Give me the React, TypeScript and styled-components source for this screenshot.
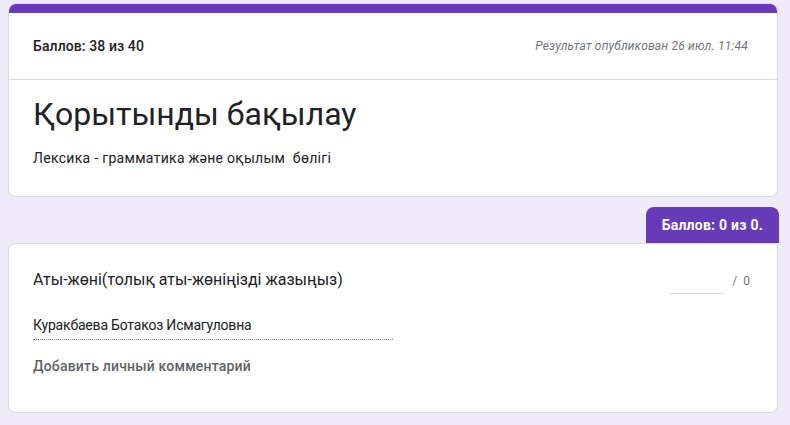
import React from 'react';
import styled, { createGlobalStyle } from 'styled-components';

const purple = '#673ab7';

const GlobalStyle = createGlobalStyle`
  html, body {
    margin: 0;
    padding: 0;
    background: #f0ebf8;
    font-family: Roboto, "Liberation Sans", Arial, sans-serif;
    color: #202124;
  }
`;

const Page = styled.div`
  padding: 3px 12px 0 8px;
  width: 770px;
`;

const Card = styled.div<{ $squareTopRight?: boolean }>`
  background: #fff;
  border: 1px solid #dadce0;
  border-radius: ${p => (p.$squareTopRight ? '8px 0 8px 8px' : '8px')};
  overflow: hidden;
`;

const TopBand = styled.div`
  height: 10px;
  background: ${purple};
  margin: -1px -1px 0 -1px;
`;

const ScoreRow = styled.div`
  display: flex;
  align-items: center;
  justify-content: space-between;
  height: 66px;
  padding: 0 29px 0 24px;
  border-bottom: 1px solid #dadce0;
`;

const ScoreTotal = styled.div`
  font-size: 14px;
  font-weight: 500;
  letter-spacing: 0.1px;
`;

const Published = styled.div`
  font-size: 12px;
  font-style: italic;
  color: #70757a;
  letter-spacing: 0.2px;
`;

const TitleBlock = styled.div`
  padding: 12px 24px 28px 24px;
`;

const Title = styled.h1`
  margin: 0;
  font-size: 32px;
  font-weight: 400;
  line-height: 44px;
`;

const Description = styled.div`
  margin-top: 12px;
  font-size: 14px;
  line-height: 20px;
  letter-spacing: 0.3px;
`;

const QuestionWrap = styled.div`
  margin-top: 10px;
  display: flex;
  flex-direction: column;
  align-items: flex-end;
`;

const PointsBadge = styled.div`
  background: ${purple};
  color: #fff;
  font-size: 14px;
  font-weight: 700;
  letter-spacing: 0.25px;
  height: 36px;
  line-height: 36px;
  padding: 0 16px;
  border-radius: 8px 8px 0 0;
  margin-right: -1px;
`;

const QuestionCard = styled(Card)`
  width: 770px;
  padding: 24px 24px 36px 24px;
  box-sizing: border-box;
`;

const QuestionHead = styled.div`
  display: flex;
  align-items: flex-start;
  justify-content: space-between;
`;

const QuestionText = styled.div`
  font-size: 16px;
  line-height: 24px;
`;

const Grade = styled.div`
  display: flex;
  align-items: flex-start;
  gap: 8px;
  padding-right: 3px;
  margin-top: 1px;
`;

const GradeInput = styled.div`
  width: 54px;
  height: 24px;
  border-bottom: 1px solid #dadce0;
`;

const GradeMax = styled.div`
  font-size: 12px;
  color: #70757a;
  line-height: 24px;
  word-spacing: 3px;
`;

const Answer = styled.div`
  margin-top: 21px;
  width: 360px;
  font-size: 14px;
  letter-spacing: -0.2px;
  line-height: 20px;
  padding-bottom: 4px;
  border-bottom: 1px dotted #70757a;
`;

const CommentLink = styled.div`
  margin-top: 16px;
  font-size: 14px;
  font-weight: 500;
  letter-spacing: 0.2px;
  color: #5f6368;
  line-height: 20px;
`;

export default function App() {
  return (
    <>
      <GlobalStyle />
      <Page>
        <Card>
          <TopBand />
          <ScoreRow>
            <ScoreTotal>Баллов: 38 из 40</ScoreTotal>
            <Published>Результат опубликован 26 июл. 11:44</Published>
          </ScoreRow>
          <TitleBlock>
            <Title>Қорытынды бақылау</Title>
            <Description>Лексика - грамматика және оқылым&nbsp; бөлігі</Description>
          </TitleBlock>
        </Card>

        <QuestionWrap>
          <PointsBadge>Баллов: 0 из 0.</PointsBadge>
          <QuestionCard $squareTopRight>
            <QuestionHead>
              <QuestionText>Аты-жөні(толық аты-жөніңізді жазыңыз)</QuestionText>
              <Grade>
                <GradeInput />
                <GradeMax>/ 0</GradeMax>
              </Grade>
            </QuestionHead>
            <Answer>Куракбаева Ботакоз Исмагуловна</Answer>
            <CommentLink>Добавить личный комментарий</CommentLink>
          </QuestionCard>
        </QuestionWrap>
      </Page>
    </>
  );
}
